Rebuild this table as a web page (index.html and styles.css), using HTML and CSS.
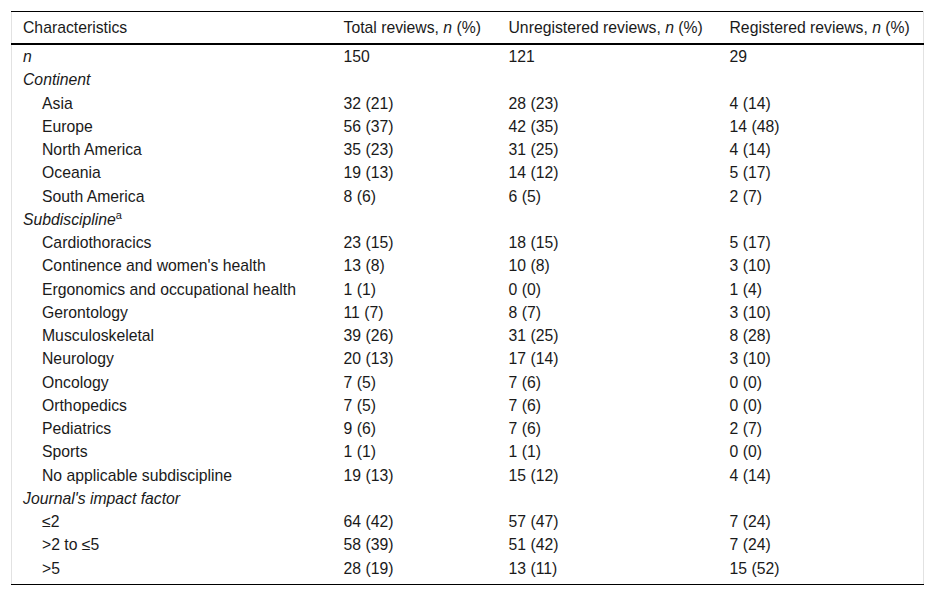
FILE: index.html
```html
<!DOCTYPE html>
<html lang="en">
<head>
<meta charset="utf-8">
<title>Review characteristics</title>
<link rel="stylesheet" href="styles.css">
</head>
<body>
<div class="wrap">
<table class="tbl">
<colgroup>
<col class="c1"><col class="c2"><col class="c3"><col class="c4">
</colgroup>
<thead>
<tr><th>Characteristics</th><th>Total reviews, <i>n</i> (%)</th><th>Unregistered reviews, <i>n</i> (%)</th><th>Registered reviews, <i>n</i> (%)</th></tr>
</thead>
<tbody>
<tr><td><i>n</i></td><td>150</td><td>121</td><td>29</td></tr>
<tr><td><i>Continent</i></td><td></td><td></td><td></td></tr>
<tr><td class="ind">Asia</td><td>32 (21)</td><td>28 (23)</td><td>4 (14)</td></tr>
<tr><td class="ind">Europe</td><td>56 (37)</td><td>42 (35)</td><td>14 (48)</td></tr>
<tr><td class="ind">North America</td><td>35 (23)</td><td>31 (25)</td><td>4 (14)</td></tr>
<tr><td class="ind">Oceania</td><td>19 (13)</td><td>14 (12)</td><td>5 (17)</td></tr>
<tr><td class="ind">South America</td><td>8 (6)</td><td>6 (5)</td><td>2 (7)</td></tr>
<tr><td><i>Subdiscipline</i><sup>a</sup></td><td></td><td></td><td></td></tr>
<tr><td class="ind">Cardiothoracics</td><td>23 (15)</td><td>18 (15)</td><td>5 (17)</td></tr>
<tr><td class="ind">Continence and women's health</td><td>13 (8)</td><td>10 (8)</td><td>3 (10)</td></tr>
<tr><td class="ind">Ergonomics and occupational health</td><td>1 (1)</td><td>0 (0)</td><td>1 (4)</td></tr>
<tr><td class="ind">Gerontology</td><td>11 (7)</td><td>8 (7)</td><td>3 (10)</td></tr>
<tr><td class="ind">Musculoskeletal</td><td>39 (26)</td><td>31 (25)</td><td>8 (28)</td></tr>
<tr><td class="ind">Neurology</td><td>20 (13)</td><td>17 (14)</td><td>3 (10)</td></tr>
<tr><td class="ind">Oncology</td><td>7 (5)</td><td>7 (6)</td><td>0 (0)</td></tr>
<tr><td class="ind">Orthopedics</td><td>7 (5)</td><td>7 (6)</td><td>0 (0)</td></tr>
<tr><td class="ind">Pediatrics</td><td>9 (6)</td><td>7 (6)</td><td>2 (7)</td></tr>
<tr><td class="ind">Sports</td><td>1 (1)</td><td>1 (1)</td><td>0 (0)</td></tr>
<tr><td class="ind">No applicable subdiscipline</td><td>19 (13)</td><td>15 (12)</td><td>4 (14)</td></tr>
<tr><td><i>Journal's impact factor</i></td><td></td><td></td><td></td></tr>
<tr><td class="ind">≤2</td><td>64 (42)</td><td>57 (47)</td><td>7 (24)</td></tr>
<tr><td class="ind">&gt;2 to ≤5</td><td>58 (39)</td><td>51 (42)</td><td>7 (24)</td></tr>
<tr class="last"><td class="ind">&gt;5</td><td>28 (19)</td><td>13 (11)</td><td>15 (52)</td></tr>
</tbody>
</table>
</div>
</body>
</html>
```
FILE: styles.css
```css
html, body {
  margin: 0;
  padding: 0;
  background: #fff;
}
.wrap {
  padding: 11px 0 0 11px;
}
.tbl {
  border-collapse: collapse;
  table-layout: fixed;
  width: 913px;
  font-family: "Liberation Sans", Arial, sans-serif;
  font-size: 15.75px;
  color: #1a1a1a;
  border-top: 1px solid #000;
  border-bottom: 1px solid #000;
  border-left: 1px solid #e2e2e2;
  border-right: 1px solid #e2e2e2;
}
.c1 { width: 321px; }
.c2 { width: 165px; }
.c3 { width: 221px; }
.c4 { width: 205px; }
.tbl th {
  font-weight: normal;
  text-align: left;
  padding: 7px 11px;
  line-height: 17px;
  border-bottom: 2px solid #000;
  white-space: nowrap;
}
.tbl td {
  padding: 3px 11px;
  line-height: 17.25px;
  text-align: left;
  white-space: nowrap;
}
.tbl td.ind {
  padding-left: 30px;
}
.tbl tr.last td {
  padding-bottom: 7px;
}
.tbl sup {
  font-size: 11px;
  line-height: 0;
  vertical-align: 6px;
}
```
